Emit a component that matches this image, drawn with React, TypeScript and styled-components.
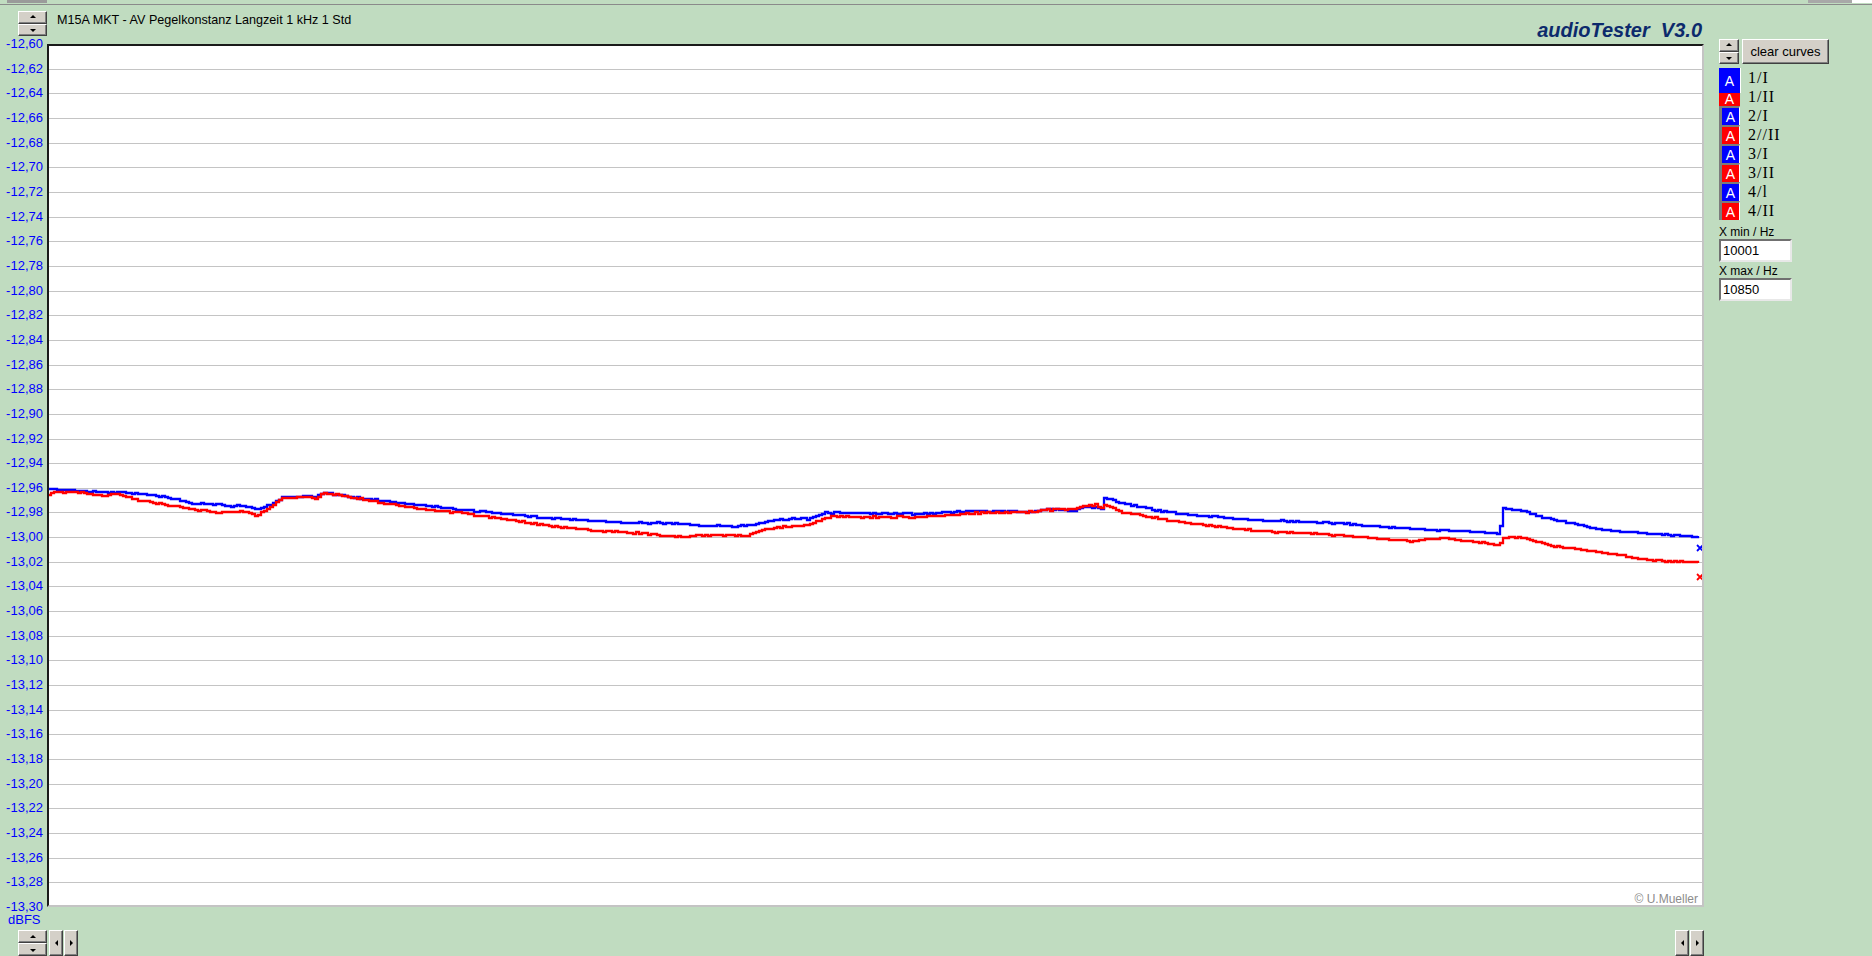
import React, { useMemo } from 'react';
import styled, { createGlobalStyle, css } from 'styled-components';

const GlobalStyle = createGlobalStyle`
  html, body {
    margin: 0;
    padding: 0;
    background: #c0dcc0;
  }
  body {
    font-family: "Liberation Sans", Arial, sans-serif;
    overflow: hidden;
  }
`;

const Window = styled.div`
  width: 1872px;
  height: 956px;
  background: #c0dcc0;
  display: flex;
  flex-direction: column;
  overflow: hidden;
`;

const TopEdge = styled.div`
  height: 4px;
  flex: none;
  display: flex;
  border-bottom: 1px solid #8a8a8a;
`;

const EdgeBlock = styled.div<{ $w: number; $tone: string; $offset?: number }>`
  width: ${p => p.$w}px;
  margin-left: ${p => p.$offset ?? 0}px;
  height: 3px;
  background: ${p => p.$tone};
`;

const Body = styled.div`
  flex: 1;
  display: grid;
  grid-template-columns: 47px 1657px 1fr;
  grid-template-rows: 39px 863px 1fr;
`;

const Header = styled.div`
  grid-column: 1 / span 2;
  grid-row: 1;
  display: flex;
  align-items: flex-start;
  padding: 6px 2px 0 18px;
`;

const Title = styled.div`
  margin: 2px 0 0 10px;
  font-size: 12.6px;
  line-height: 14px;
  color: #000;
  white-space: pre;
`;

const Brand = styled.div`
  margin-left: auto;
  align-self: flex-end;
  margin-bottom: 3px;
  font-size: 20px;
  line-height: 22px;
  font-weight: bold;
  font-style: italic;
  color: #0c2a6c;
  white-space: pre;
`;

const raised = css`
  background: #d4d0c8;
  border: 1px solid;
  border-color: #ffffff #404040 #404040 #ffffff;
  box-shadow: inset -1px -1px #808080;
  box-sizing: border-box;
`;

const Spin = styled.div<{ $w: number; $h: number }>`
  width: ${p => p.$w}px;
  height: ${p => p.$h}px;
  display: flex;
  flex-direction: column;
  flex: none;
`;

const SpinHalf = styled.div`
  ${raised};
  flex: 1;
  display: flex;
  align-items: center;
  justify-content: center;
`;

const Arrow = styled.span<{ $dir: 'up' | 'down' | 'left' | 'right' }>`
  width: 0;
  height: 0;
  border: 3px solid transparent;
  ${p => p.$dir === 'up' && css`border-bottom-color: #000; border-top-width: 0; margin-top: -1px;`}
  ${p => p.$dir === 'down' && css`border-top-color: #000; border-bottom-width: 0; margin-top: 1px;`}
  ${p => p.$dir === 'left' && css`border-right-color: #000; border-left-width: 0;`}
  ${p => p.$dir === 'right' && css`border-left-color: #000; border-right-width: 0;`}
`;

const ArrowButton = styled.div`
  ${raised};
  width: 14px;
  height: 26px;
  display: flex;
  align-items: center;
  justify-content: center;
  flex: none;
`;

const Axis = styled.div`
  grid-column: 1;
  grid-row: 2;
  margin: -8px 0;
  display: flex;
  flex-direction: column;
  justify-content: space-between;
  align-items: flex-end;
  padding-right: 4px;
`;

const AxisLabel = styled.div`
  font-size: 13px;
  line-height: 16px;
  height: 16px;
  color: #0000ff;
`;

const Plot = styled.div`
  grid-column: 2;
  grid-row: 2;
  position: relative;
  background: #fff;
  border: 2px solid;
  border-color: #1a1a1a #c4c4c4 #c4c4c4 #1a1a1a;
  overflow: hidden;
`;

const ChartSvg = styled.svg`
  display: block;
  width: 100%;
  height: 100%;
`;

const Copyright = styled.div`
  position: absolute;
  right: 4px;
  bottom: 0;
  font-size: 12px;
  line-height: 12px;
  color: #8c8c8c;
`;

const Footer = styled.div`
  grid-column: 1 / span 2;
  grid-row: 3;
  display: flex;
  flex-direction: column;
  padding-top: 4px;
`;

const UnitLabel = styled.div`
  padding-left: 8px;
  font-size: 13px;
  line-height: 17px;
  color: #0000ff;
`;

const ButtonRow = styled.div`
  margin-top: 2px;
  height: 26px;
  display: flex;
  padding-left: 18px;
`;

const ButtonGroup = styled.div<{ $push?: boolean; $gap?: number }>`
  display: flex;
  gap: 1px;
  margin-left: ${p => (p.$push ? 'auto' : `${p.$gap ?? 0}px`)};
`;

const Panel = styled.div`
  grid-column: 3;
  grid-row: 1 / span 3;
  padding: 34px 0 0 15px;
  display: flex;
  flex-direction: column;
`;

const PanelTop = styled.div`
  display: flex;
  gap: 3px;
  height: 25px;
`;

const ClearButton = styled.div`
  ${raised};
  width: 87px;
  height: 25px;
  font-size: 13px;
  line-height: 23px;
  text-align: center;
  color: #000;
`;

const Legend = styled.div`
  display: flex;
  margin-top: 4px;
`;

const SwatchColumn = styled.div`
  display: flex;
  flex-direction: column;
  width: 22px;
`;

type SwatchKind = 'active' | 'flat' | 'normal';

const Swatch = styled.div<{ $color: string; $kind: SwatchKind }>`
  box-sizing: border-box;
  background: ${p => p.$color};
  color: #fff;
  font-size: 14px;
  display: flex;
  align-items: center;
  justify-content: center;
  ${p => p.$kind === 'active' && css`
    width: 22px;
    height: 25px;
    border-right: 1px solid #ffffff;
  `}
  ${p => p.$kind === 'flat' && css`
    width: 21px;
    height: 13px;
    line-height: 13px;
  `}
  ${p => p.$kind === 'normal' && css`
    width: 21px;
    height: 19px;
    border-left: 3px solid #7c7c7c;
    border-top: 2px solid #7c7c7c;
    border-right: 1px solid #ffffff;
  `}
`;

const LabelColumn = styled.div`
  display: flex;
  flex-direction: column;
  margin-left: 7px;
`;

const LegendLabel = styled.div`
  height: 19px;
  font-family: "Liberation Serif", "Times New Roman", serif;
  font-size: 16px;
  line-height: 19px;
  letter-spacing: 1px;
  color: #000;
`;

const FieldLabel = styled.div<{ $top: number }>`
  margin-top: ${p => p.$top}px;
  font-size: 12px;
  line-height: 14px;
  color: #000;
`;

const Field = styled.div`
  width: 73px;
  height: 23px;
  box-sizing: border-box;
  background: #fff;
  border: 2px solid;
  border-color: #707070 #e8e8e8 #e8e8e8 #707070;
  font-size: 13px;
  line-height: 19px;
  padding-left: 2px;
  color: #000;
`;

type Pt = [number, number];

const blue: Pt[] = [
  [48, 489], [77, 491], [100, 492], [115, 492], [153, 495], [191, 503], [222, 505], [230, 507],
  [237, 505], [256, 509], [268, 505], [283, 497], [306, 496], [314, 497], [323, 493], [344, 496],
  [383, 501], [421, 505], [459, 510], [497, 513], [536, 517], [597, 521], [629, 523], [671, 523],
  [707, 526], [743, 526], [761, 523], [779, 519], [807, 519], [825, 513], [850, 513], [921, 514],
  [975, 511], [1029, 512], [1046, 509], [1075, 511], [1082, 507], [1100, 508], [1101, 509],
  [1103, 497], [1118, 502], [1139, 507], [1178, 514], [1256, 520], [1333, 523], [1411, 529],
  [1497, 533], [1499, 534], [1502, 508], [1520, 510], [1540, 517], [1567, 523], [1606, 530],
  [1645, 533], [1699, 537],
];

const red: Pt[] = [
  [48, 495], [55, 492], [77, 492], [100, 496], [115, 494], [142, 501], [191, 509], [222, 513],
  [241, 511], [256, 516], [283, 498], [306, 497], [314, 499], [323, 493], [344, 496], [383, 503],
  [421, 509], [459, 513], [497, 518], [536, 524], [597, 531], [636, 533], [679, 537], [707, 535],
  [746, 536], [761, 530], [779, 527], [807, 525], [829, 517], [850, 517], [921, 517], [975, 513],
  [1029, 512], [1046, 510], [1075, 509], [1082, 506], [1096, 505], [1100, 509], [1103, 504],
  [1121, 512], [1139, 515], [1178, 522], [1256, 531], [1333, 535], [1411, 541], [1442, 538],
  [1497, 545], [1499, 545], [1502, 538], [1520, 537], [1547, 545], [1606, 553], [1645, 560],
  [1699, 563],
];

function rng(seed: number) {
  return () => {
    seed |= 0;
    seed = (seed + 0x6d2b79f5) | 0;
    let t = Math.imul(seed ^ (seed >>> 15), 1 | seed);
    t = (t + Math.imul(t ^ (t >>> 7), 61 | t)) ^ t;
    return ((t ^ (t >>> 14)) >>> 0) / 4294967296;
  };
}

// walk the key points in 3px steps with a little noise, like the sampled trace
function stepPath(points: Pt[], seed: number) {
  const rand = rng(seed);
  const at = (x: number) => {
    for (let i = 1; i < points.length; i++) {
      const [x1, y1] = points[i];
      const [x0, y0] = points[i - 1];
      if (x <= x1) return y0 + ((y1 - y0) * (x - x0)) / (x1 - x0 || 1);
    }
    return points[points.length - 1][1];
  };
  const start = points[0][0];
  const end = points[points.length - 1][0];
  let d = `M${start} ${Math.round(at(start))}`;
  for (let x = start + 3; x <= end; x += 3) {
    const y = Math.round(at(x) + (rand() - 0.5) * 1.4);
    d += ` H${x} V${y}`;
  }
  return d;
}

const values = Array.from({ length: 36 }, (_, i) => (12.6 + i * 0.02).toFixed(2).replace('.', ','));

const curves = [
  { label: '1/I', color: '#0000ff', kind: 'active' as SwatchKind },
  { label: '1/II', color: '#ff0000', kind: 'flat' as SwatchKind },
  { label: '2/I', color: '#0000ff', kind: 'normal' as SwatchKind },
  { label: '2//II', color: '#ff0000', kind: 'normal' as SwatchKind },
  { label: '3/I', color: '#0000ff', kind: 'normal' as SwatchKind },
  { label: '3/II', color: '#ff0000', kind: 'normal' as SwatchKind },
  { label: '4/l', color: '#0000ff', kind: 'normal' as SwatchKind },
  { label: '4/II', color: '#ff0000', kind: 'normal' as SwatchKind },
];

const SpinButton = ({ w, h }: { w: number; h: number }) => (
  <Spin $w={w} $h={h}>
    <SpinHalf><Arrow $dir="up" /></SpinHalf>
    <SpinHalf><Arrow $dir="down" /></SpinHalf>
  </Spin>
);

const Marker = ({ x, y, color }: { x: number; y: number; color: string }) => (
  <g stroke={color} strokeWidth={1.8}>
    <line x1={x - 3} y1={y - 3} x2={x + 3} y2={y + 3} />
    <line x1={x - 3} y1={y + 3} x2={x + 3} y2={y - 3} />
  </g>
);

const Chart: React.FC = () => {
  const bluePath = useMemo(() => stepPath(blue, 7), []);
  const redPath = useMemo(() => stepPath(red, 19), []);
  const step = 863 / 35;

  return (
    <ChartSvg viewBox="49 46 1653 859" preserveAspectRatio="none">
      {Array.from({ length: 34 }, (_, i) => {
        const y = Math.round(44 + (i + 1) * step) + 0.5;
        return <line key={i} x1={49} x2={1702} y1={y} y2={y} stroke="#c4c4c4" strokeWidth={1.4} shapeRendering="crispEdges" />;
      })}
      <path d={bluePath} fill="none" stroke="#0000ff" strokeWidth={2.3} />
      <path d={redPath} fill="none" stroke="#ff0000" strokeWidth={2.3} />
      <Marker x={1700} y={548} color="#0000ff" />
      <Marker x={1700} y={577} color="#ff0000" />
    </ChartSvg>
  );
};

const App: React.FC = () => (
  <>
    <GlobalStyle />
    <Window>
      <TopEdge>
        <EdgeBlock $w={40} $offset={7} $tone="#9a9a9a" />
        <EdgeBlock $w={44} $offset={1761} $tone="#a8a8a8" />
        <EdgeBlock $w={20} $tone="#ffffff" />
      </TopEdge>
      <Body>
        <Header>
          <SpinButton w={29} h={25} />
          <Title>M15A MKT - AV Pegelkonstanz Langzeit 1 kHz 1 Std</Title>
          <Brand>audioTester  V3.0</Brand>
        </Header>

        <Axis>
          {values.map(v => (
            <AxisLabel key={v}>-{v}</AxisLabel>
          ))}
        </Axis>

        <Plot>
          <Chart />
          <Copyright>© U.Mueller</Copyright>
        </Plot>

        <Footer>
          <UnitLabel>dBFS</UnitLabel>
          <ButtonRow>
            <SpinButton w={29} h={26} />
            <ButtonGroup $gap={2}>
              <ArrowButton><Arrow $dir="left" /></ArrowButton>
              <ArrowButton><Arrow $dir="right" /></ArrowButton>
            </ButtonGroup>
            <ButtonGroup $push>
              <ArrowButton><Arrow $dir="left" /></ArrowButton>
              <ArrowButton><Arrow $dir="right" /></ArrowButton>
            </ButtonGroup>
          </ButtonRow>
        </Footer>

        <Panel>
          <PanelTop>
            <SpinButton w={20} h={25} />
            <ClearButton>clear curves</ClearButton>
          </PanelTop>
          <Legend>
            <SwatchColumn>
              {curves.map(c => (
                <Swatch key={c.label} $color={c.color} $kind={c.kind}>A</Swatch>
              ))}
            </SwatchColumn>
            <LabelColumn>
              {curves.map(c => (
                <LegendLabel key={c.label}>{c.label}</LegendLabel>
              ))}
            </LabelColumn>
          </Legend>
          <FieldLabel $top={5}>X min / Hz</FieldLabel>
          <Field>10001</Field>
          <FieldLabel $top={2}>X max / Hz</FieldLabel>
          <Field>10850</Field>
        </Panel>
      </Body>
    </Window>
  </>
);

export default App;
